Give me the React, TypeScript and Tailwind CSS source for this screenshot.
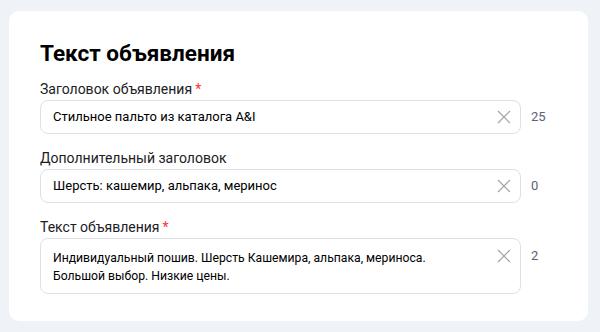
import React from 'react';

const ClearIcon: React.FC = () => (
  <svg width="14" height="14" viewBox="0 0 14 14" fill="none" className="shrink-0">
    <path d="M1 1L13 13M13 1L1 13" stroke="#a3a3a8" strokeWidth="1.2" />
  </svg>
);

type FieldProps = {
  label: string;
  required?: boolean;
  value: string;
  count: string;
  multiline?: boolean;
};

const Field: React.FC<FieldProps> = ({ label, required, value, count, multiline }) => (
  <div className="flex flex-col">
    <div className="text-[14px] leading-[18px] text-[#21201f]">
      {label}
      {required && <span className="text-[#f33] ml-[3px]">*</span>}
    </div>
    <div className="mt-[2px] flex items-start">
      <div
        className={`w-[481px] flex border border-[#dedfe8] rounded-[8px] bg-white pl-[12px] pr-[9px] ${
          multiline ? 'h-[56px] items-start pt-[10px]' : 'h-[34px] items-center'
        }`}
      >
        <div
          className={`flex-1 leading-[18px] text-black whitespace-pre-line ${
            multiline ? 'text-[12.2px]' : 'text-[13px]'
          }`}
        >
          {value}
        </div>
        <ClearIcon />
      </div>
      <div className={`ml-[10px] text-[13px] text-[#5c6271] ${multiline ? 'mt-[8px]' : 'h-[34px] flex items-center'}`}>
        {count}
      </div>
    </div>
  </div>
);

export default function App() {
  return (
    <div className="w-[600px] h-[332px] bg-[#eff2f7] pt-[11px] pl-[9px] font-['Roboto',sans-serif]">
      <div className="w-[579px] h-[310px] bg-white rounded-[10px] pt-[28px] px-[31px]">
        <h2 className="text-[22.5px] leading-[28px] font-bold text-black">Текст объявления</h2>
        <div className="mt-[13px] flex flex-col gap-[15px]">
          <Field label="Заголовок объявления" required value="Стильное пальто из каталога A&I" count="25" />
          <Field label="Дополнительный заголовок" value="Шерсть: кашемир, альпака, меринос" count="0" />
          <Field
            label="Текст объявления"
            required
            multiline
            value={'Индивидуальный пошив. Шерсть Кашемира, альпака, мериноса.\nБольшой выбор. Низкие цены.'}
            count="2"
          />
        </div>
      </div>
    </div>
  );
}
